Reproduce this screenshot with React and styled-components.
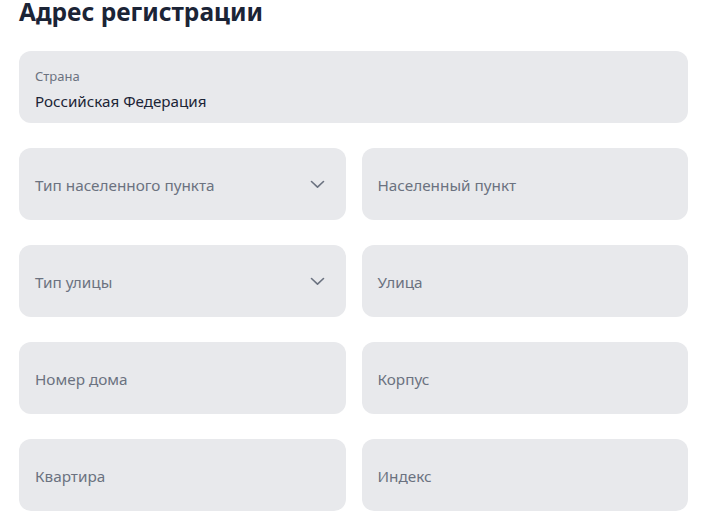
import React from "react";
import styled, { createGlobalStyle } from "styled-components";

const GlobalStyle = createGlobalStyle`
  * { box-sizing: border-box; }
  body {
    margin: 0;
    background: #fff;
    font-family: "Noto Sans", "Open Sans", sans-serif;
  }
`;

const Page = styled.section`
  padding: 0 15px 0 19px;
`;

const Title = styled.h2`
  margin: 0 0 27px;
  font-size: 24.5px;
  line-height: 24px;
  font-weight: 700;
  color: #1b2436;
`;

const Grid = styled.div`
  display: grid;
  grid-template-columns: 1fr 1fr;
  column-gap: 16px;
  row-gap: 25px;
`;

const Field = styled.div`
  grid-column: ${(p) => (p.$wide ? "1 / -1" : "auto")};
  height: 72px;
  border-radius: 12px;
  background: #e8e9ec;
  padding: 0 21px 0 16px;
  display: flex;
  align-items: center;
  justify-content: space-between;
`;

const Stack = styled.div`
  display: flex;
  flex-direction: column;
  gap: 7px;
  margin-top: 6px;
`;

const Label = styled.span`
  font-size: 13px;
  line-height: 15px;
  color: #6b7280;
`;

const Value = styled.span`
  font-size: 15.2px;
  line-height: 20px;
  color: #1b2436;
`;

const Placeholder = styled.span`
  font-size: 15.3px;
  line-height: 20px;
  color: #6b7280;
  margin-top: 2px;
`;

const Chevron = () => (
  <svg width="15" height="9" viewBox="0 0 15 9" fill="none">
    <path
      d="M1.5 1.5L7.5 7.2L13.5 1.5"
      stroke="#6b7280"
      strokeWidth="1.6"
      strokeLinecap="round"
      strokeLinejoin="round"
    />
  </svg>
);

const fields = [
  { text: "Тип населенного пункта", select: true },
  { text: "Населенный пункт" },
  { text: "Тип улицы", select: true },
  { text: "Улица" },
  { text: "Номер дома" },
  { text: "Корпус" },
  { text: "Квартира" },
  { text: "Индекс" },
];

export default function App() {
  return (
    <>
      <GlobalStyle />
      <Page>
        <Title>Адрес регистрации</Title>
        <Grid>
          <Field $wide>
            <Stack>
              <Label>Страна</Label>
              <Value>Российская Федерация</Value>
            </Stack>
          </Field>
          {fields.map((f) => (
            <Field key={f.text}>
              <Placeholder>{f.text}</Placeholder>
              {f.select && <Chevron />}
            </Field>
          ))}
        </Grid>
      </Page>
    </>
  );
}
